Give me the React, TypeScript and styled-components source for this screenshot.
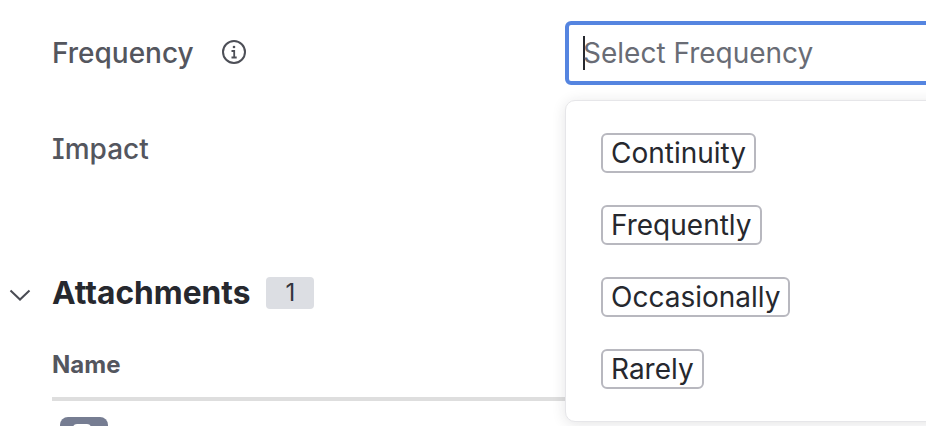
import React from "react";
import styled, { createGlobalStyle } from "styled-components";

const Global = createGlobalStyle`
  html, body { margin: 0; padding: 0; background: #fff; }
  body { width: 926px; height: 426px; overflow: hidden; font-family: Inter, "Liberation Sans", sans-serif; }
`;

const Page = styled.div`
  position: relative;
  width: 926px;
  height: 426px;
  overflow: hidden;
  background: #fff;
`;

const FieldRow = styled.div`
  display: grid;
  grid-template-columns: 513px 1fr;
  padding-left: 52px;
  height: ${(p) => p.$height}px;
  align-items: start;
`;

const LabelWrap = styled.div`
  display: flex;
  align-items: center;
  gap: 28px;
  height: 34px;
  margin-top: 36px;
`;

const Label = styled.span`
  font-size: 28px;
  font-weight: 500;
  font-feature-settings: "cv08" 1;
  color: #54565e;
  line-height: 34px;
`;

const InfoIcon = styled.svg`
  width: 26px;
  height: 26px;
  margin-top: -3px;
  margin-left: -1px;
  color: #4d4f57;
`;

const SelectBox = styled.div`
  box-sizing: border-box;
  margin-top: 21px;
  width: 420px;
  height: 64px;
  border: 4px solid #5585e0;
  border-radius: 6px;
  display: flex;
  align-items: center;
  padding-left: 14px;
  background: #fff;
`;

const Caret = styled.span`
  width: 2px;
  height: 34px;
  background: #26282e;
  margin-right: -2px;
  flex: none;
`;

const Placeholder = styled.span`
  font-size: 28px;
  color: #696c75;
  line-height: 34px;
`;

const Menu = styled.div`
  position: absolute;
  left: 565px;
  top: 100px;
  box-sizing: border-box;
  width: 420px;
  height: 322px;
  background: #fff;
  border: 1px solid #e6e6e9;
  border-radius: 10px;
  box-shadow: 0 2px 14px rgba(30, 32, 40, 0.12);
  padding: 32px 35px;
  display: flex;
  flex-direction: column;
  align-items: flex-start;
  gap: 32px;
`;

const Chip = styled.div`
  box-sizing: border-box;
  height: 40px;
  padding: 0 8px;
  border: 2px solid #b8b8bf;
  border-radius: 6px;
  font-size: 28px;
  line-height: 36px;
  color: #26282e;
  white-space: nowrap;
`;

const SectionHeader = styled.div`
  display: flex;
  align-items: center;
  height: 32px;
  margin-top: 3px;
  padding-left: 9px;
`;

const Chevron = styled.svg`
  width: 22px;
  height: 12px;
  margin-right: 21px;
  margin-top: 4px;
  color: #4a4c54;
`;

const Title = styled.h2`
  margin: 0;
  font-size: 31.7px;
  font-weight: 700;
  color: #26282e;
  line-height: 32px;
`;

const Badge = styled.span`
  margin-left: 16px;
  width: 48px;
  height: 32px;
  border-radius: 4px;
  background: #dcdee3;
  color: #33353c;
  font-size: 24px;
  line-height: 32px;
  text-align: center;
`;

const ColumnHead = styled.div`
  margin: 42px 0 0 52px;
  padding-bottom: 18px;
  border-bottom: 4px solid #dedede;
  font-size: 24px;
  font-weight: 700;
  line-height: 28px;
  color: #54565e;
`;

const FileIcon = styled.div`
  margin: 16px 0 0 60px;
  width: 48px;
  height: 48px;
  border-radius: 8px;
  background: #767d92;
  display: flex;
  padding: 7px 0 0 13px;
  box-sizing: border-box;
`;

const FileGlyph = styled.div`
  width: 18px;
  height: 30px;
  border-radius: 4px;
  background: #fff;
`;

const options = ["Continuity", "Frequently", "Occasionally", "Rarely"];

export default function App() {
  return (
    <Page>
      <Global />
      <FieldRow $height={96}>
        <LabelWrap>
          <Label>Frequency</Label>
          <InfoIcon viewBox="0 0 26 26" fill="none" stroke="currentColor" strokeWidth="2">
            <circle cx="13" cy="13" r="11" />
            <path d="M10.5 12h2.7v6.5M10.5 18.5h5.2" strokeWidth="1.8" />
            <circle cx="13" cy="8" r="1.3" fill="currentColor" stroke="none" />
          </InfoIcon>
        </LabelWrap>
        <SelectBox>
          <Caret />
          <Placeholder>Select Frequency</Placeholder>
        </SelectBox>
      </FieldRow>
      <FieldRow $height={178}>
        <LabelWrap>
          <Label>Impact</Label>
        </LabelWrap>
      </FieldRow>
      <SectionHeader>
        <Chevron viewBox="0 0 22 12" fill="none" stroke="currentColor" strokeWidth="2">
          <path d="M1.5 1.5 11 10.5 20.5 1.5" />
        </Chevron>
        <Title>Attachments</Title>
        <Badge>1</Badge>
      </SectionHeader>
      <ColumnHead>Name</ColumnHead>
      <FileIcon>
        <FileGlyph />
      </FileIcon>
      <Menu>
        {options.map((o) => (
          <Chip key={o}>{o}</Chip>
        ))}
      </Menu>
    </Page>
  );
}
